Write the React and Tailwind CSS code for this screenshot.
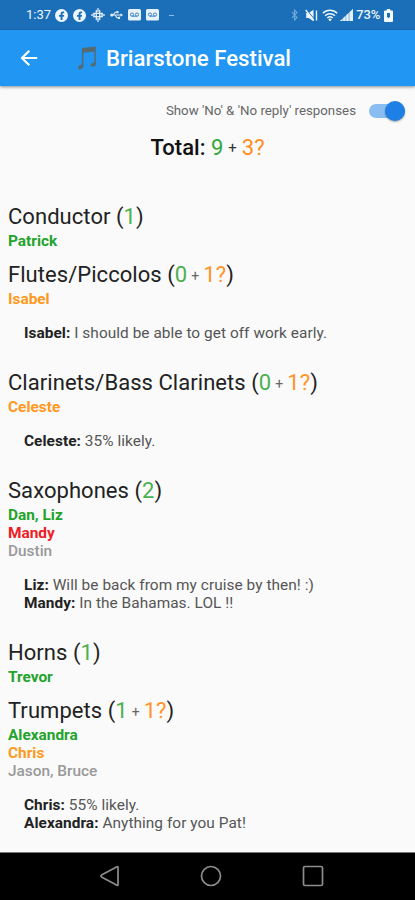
import React, { useState } from 'react';

const sections = [
  { name: 'Conductor', yes: 1, going: 'Patrick' },
  {
    name: 'Flutes/Piccolos',
    yes: 0,
    maybe: 1,
    unsure: 'Isabel',
    notes: [{ from: 'Isabel', text: 'I should be able to get off work early.' }],
  },
  {
    name: 'Clarinets/Bass Clarinets',
    yes: 0,
    maybe: 1,
    unsure: 'Celeste',
    notes: [{ from: 'Celeste', text: '35% likely.' }],
  },
  {
    name: 'Saxophones',
    yes: 2,
    going: 'Dan, Liz',
    declined: 'Mandy',
    noReply: 'Dustin',
    notes: [
      { from: 'Liz', text: 'Will be back from my cruise by then! :)' },
      { from: 'Mandy', text: 'In the Bahamas. LOL !!' },
    ],
  },
  { name: 'Horns', yes: 1, going: 'Trevor' },
  {
    name: 'Trumpets',
    yes: 1,
    maybe: 1,
    going: 'Alexandra',
    unsure: 'Chris',
    noReply: 'Jason, Bruce',
    notes: [
      { from: 'Chris', text: '55% likely.' },
      { from: 'Alexandra', text: 'Anything for you Pat!' },
    ],
  },
];

const FacebookIcon = () => (
  <svg className="w-[13px] h-[13px]" viewBox="0 0 13 13">
    <circle cx="6.5" cy="6.5" r="6.5" fill="#eef6fc" />
    <path d="M5.6 11V7.700H4V6h1.6V4.900c0-1.600 1-2.300 2.400-2.300h1.1V4.200H8.300c-.6 0-.8.3-.8.8V6h1.6l-.3 1.700H7.5V11z" fill="#1b6fb8" />
  </svg>
);

const CrosshairIcon = () => (
  <svg className="w-[14px] h-[14px]" viewBox="0 0 14 14" fill="none" stroke="#e3effa" strokeWidth="1.300" strokeLinecap="round">
    <path d="M5.300 2.500v9M8.700 2.500v9M2.500 5.300h9M2.500 8.700h9" />
    <path d="M7 .6v3M7 10.400v3M.6 7h3M10.400 7h3" />
  </svg>
);

const UsbIcon = () => (
  <svg className="w-[13px] h-[10px]" viewBox="0 0 13 10" fill="none" stroke="#e3effa" strokeWidth="1.1">
    <path d="M1.5 5H11M3.2 5l2-2.8H7M5 5l2 2.8h1.8" />
    <circle cx="1.8" cy="5" r="1.6" fill="#e3effa" stroke="none" />
    <path d="M10.5 3.2L13 5l-2.5 1.8zM6.5 1h2v2.2h-2zM8 6.8h2V9H8z" fill="#e3effa" stroke="none" />
  </svg>
);

const VoicemailIcon = () => (
  <svg className="w-[13px] h-[12px]" viewBox="0 0 13 12">
    <rect width="13" height="11.5" rx="1.6" fill="#e8f2fb" />
    <g fill="none" stroke="#3d84c2" strokeWidth="1">
      <circle cx="4" cy="5.6" r="1.6" />
      <circle cx="9" cy="5.6" r="1.6" />
      <path d="M4 7.2h5" />
    </g>
  </svg>
);

const BluetoothIcon = () => (
  <svg className="w-[7px] h-[12px]" viewBox="0 0 7 12" fill="none" stroke="#6fa9dc" strokeWidth="1.1">
    <path d="M1 3.2l5 5.3L3.5 11V1L6 3.5 1 8.8" />
  </svg>
);

const MuteIcon = () => (
  <svg className="w-[13px] h-[13px]" viewBox="0 0 13 13">
    <path d="M1.2 4h2.500L8.500.8v11.400L3.700 9H1.200z" fill="#edf5fc" />
    <path d="M2 1.200l7 8.500" stroke="#1b6fb8" strokeWidth="1" />
    <path d="M.7 1l8 10.400M11.500 1.500v10" stroke="#edf5fc" strokeWidth="1.300" />
  </svg>
);

const WifiIcon = () => (
  <svg className="w-[16px] h-[13px]" viewBox="0 0 16 13" fill="none" stroke="#edf5fc" strokeWidth="1.5">
    <path d="M.8 4.2c4-4 10.400-4 14.400 0M3 6.800c2.900-2.700 7.100-2.700 10 0M5.300 9c1.600-1.400 3.800-1.400 5.400 0" />
    <path d="M6.200 10.200L8 12.600l1.800-2.400c-1-.8-2.600-.8-3.600 0z" fill="#edf5fc" stroke="none" />
  </svg>
);

const SignalIcon = () => (
  <svg className="w-[13px] h-[12px]" viewBox="0 0 13 12">
    <path d="M0 12L13 0v12z" fill="#9dc3e6" />
    <path d="M0 12l2.200-2V12zM3.200 12V9l2-1.800V12zM6.400 12V6l2-1.800V12zM9.800 12V3L13 0v12z" fill="#e3effa" />
  </svg>
);

const BatteryIcon = () => (
  <svg className="w-[9px] h-[13px]" viewBox="0 0 9 13">
    <path d="M2.800 0h3.400v1.500H8a1 1 0 011 1V12a1 1 0 01-1 1H1a1 1 0 01-1-1V2.500a1 1 0 011-1h1.800z" fill="#f4f9fd" />
    <path d="M3 4h3v3.500L4.500 9.500 3 7.500z" fill="#1b6fb8" />
  </svg>
);

const NoteIcon = () => (
  <svg className="w-[20px] h-[24px]" viewBox="0 0 20 24" fill="#556b74">
    <path d="M4.900 2L18.800.6v18h-1.500V5.500L6.400 6.800v14H4.900z" />
    <ellipse cx="3.700" cy="21" rx="2.700" ry="2" transform="rotate(-20 3.700 21)" />
    <ellipse cx="16.200" cy="18.700" rx="2.600" ry="2" transform="rotate(-20 16.200 18.700)" />
  </svg>
);

const StatusBar = () => (
  <div className="h-[30px] bg-[#1b6fb8] flex items-center justify-between pl-[26px] pr-[22px] text-[#edf5fc] text-[13px]">
    <div className="flex items-center gap-[5px]">
      <span className="w-[24px] whitespace-nowrap">1:37</span>
      <FacebookIcon />
      <FacebookIcon />
      <CrosshairIcon />
      <UsbIcon />
      <VoicemailIcon />
      <VoicemailIcon />
      <span className="ml-[5px] w-[5px] h-px bg-[#8fbce3]" />
    </div>
    <div className="flex items-center">
      <BluetoothIcon />
      <span className="ml-[7px]"><MuteIcon /></span>
      <span className="ml-[4px]"><WifiIcon /></span>
      <span className="ml-[2px]"><SignalIcon /></span>
      <span className="ml-[3px] mr-[4px] tracking-[-0.2px] font-medium">73%</span>
      <BatteryIcon />
    </div>
  </div>
);

const AppBar = () => (
  <div className="h-[56px] bg-[#2196f3] flex items-center pl-[20px] text-white shadow-[0_1px_3px_rgba(0,0,0,0.45)]">
    <svg className="w-[18px] h-[18px]" viewBox="0 0 18 18" fill="none" stroke="currentColor" strokeWidth="2.100">
      <path d="M17.200 9H2.500M9.300 1.700L2 9l7.300 7.300" />
    </svg>
    <div className="ml-[39px]"><NoteIcon /></div>
    <h1 className="ml-[9px] text-[22.200px] leading-[26px] pb-px font-medium whitespace-nowrap">Briarstone Festival</h1>
  </div>
);

const Section = ({ section }) => (
  <div className="mb-[9px]">
    <h2 className="h-[31px] leading-[31px] text-[22px] tracking-[0.050px] whitespace-nowrap">
      {section.name} (<span className="text-[#4caf50]">{section.yes}</span>
      {section.maybe && (
        <>
          <span className="inline-block mx-[4px] pb-[3px] leading-none align-[1px] text-[14px] text-[#666]">+</span>
          <span className="text-[#ff9428]">{section.maybe}?</span>
        </>
      )}
      )
    </h2>
    <div className="text-[15.400px] leading-[18px]">
      {section.going && <p className="font-bold text-[#22a32b]">{section.going}</p>}
      {section.unsure && <p className="font-bold text-[#ff9820]">{section.unsure}</p>}
      {section.declined && <p className="font-bold text-[#ee1c25]">{section.declined}</p>}
      {section.noReply && <p className="font-medium text-[#999]">{section.noReply}</p>}
    </div>
    {section.notes && (
      <div className="px-4 py-4 text-[15.400px] tracking-[0.050px] leading-[18px] text-[#555]">
        {section.notes.map((note) => (
          <p key={note.from} className="whitespace-nowrap">
            <b className="font-bold text-[#222]">{note.from}:</b> {note.text}
          </p>
        ))}
      </div>
    )}
  </div>
);

const NavBar = () => (
  <div className="h-[48px] shrink-0 bg-black border-t border-[#777] flex items-center gap-[80px] pl-[98px] pb-px">
    <svg className="w-[22px] h-[22px]" viewBox="0 0 22 22" fill="none" stroke="#8c8c8c" strokeWidth="1.700" strokeLinejoin="round">
      <path d="M20 2.300v17.400q0 1-1 .5L3.500 11.900q-1.200-.9 0-1.800L19 1.800q1-.5 1 .5z" />
    </svg>
    <svg className="w-[22px] h-[22px]" viewBox="0 0 22 22" fill="none" stroke="#8c8c8c" strokeWidth="1.700">
      <circle cx="11" cy="11" r="9.500" />
    </svg>
    <svg className="w-[22px] h-[22px]" viewBox="0 0 22 22" fill="none" stroke="#8c8c8c" strokeWidth="1.700">
      <rect x="1.500" y="1.500" width="19" height="19" rx="1.500" />
    </svg>
  </div>
);

const App = () => {
  const [showAll, setShowAll] = useState(true);

  return (
    <div className="w-full h-screen flex flex-col bg-[#fafafa] font-[Roboto,sans-serif] text-[#222] overflow-hidden">
      <StatusBar />
      <AppBar />
      <main className="flex-1 min-h-0 overflow-hidden">
        <div className="h-[49px] flex items-center justify-end gap-[13px] pr-[10px] text-[13.300px] text-[#666]">
          <span className="whitespace-nowrap">Show 'No' &amp; 'No reply' responses</span>
          <button
            type="button"
            onClick={() => setShowAll(!showAll)}
            className={`w-[36px] h-[14px] rounded-full flex items-center ${showAll ? 'bg-[#8abef2] justify-end' : 'bg-gray-300 justify-start'}`}
          >
            <span className="w-[20px] h-[20px] shrink-0 rounded-full bg-[#1e80e4] shadow-[0_1px_2px_rgba(0,0,0,0.35)]" />
          </button>
        </div>
        <div className="h-[66px] text-center text-[22px] leading-[26px] text-[#111]">
          <span className="font-medium">Total: </span>
          <span className="text-[#2fa838]">9</span>
          <span className="mx-[5px] text-[15px] align-[2px] leading-none text-[#333]">+</span>
          <span className="text-[#ff8c1f]">3?</span>
        </div>
        <div className="px-2">
          {sections.map((section) => (
            <Section key={section.name} section={section} />
          ))}
        </div>
      </main>
      <NavBar />
    </div>
  );
};

export default App;
